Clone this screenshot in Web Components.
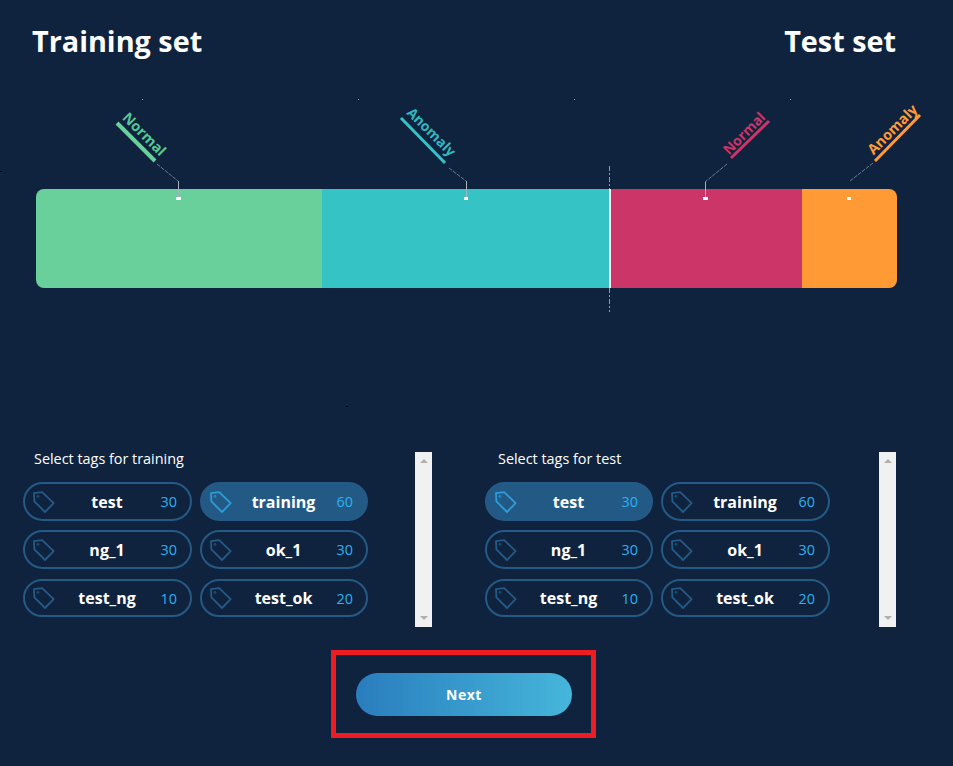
<!DOCTYPE html>
<html lang="en">
<head>
<meta charset="utf-8">
<title>Split</title>
<style>
    html, body { margin: 0; background: #0f233f; }
    body { font-family: "Open Sans", "Liberation Sans", sans-serif; color: #fff; }
</style>
</head>
<body>
<split-page>
    <set-header slot="header"></set-header>
    <split-chart slot="chart"></split-chart>
    <tag-panel slot="panels" heading="Select tags for training">
        <tag-chip count="30">test</tag-chip>
        <tag-chip count="60" active>training</tag-chip>
        <tag-chip count="30">ng_1</tag-chip>
        <tag-chip count="30">ok_1</tag-chip>
        <tag-chip count="10">test_ng</tag-chip>
        <tag-chip count="20">test_ok</tag-chip>
    </tag-panel>
    <tag-panel slot="panels" heading="Select tags for test" style="--main: 394px; --pad: 13px; --cols: 168px 169px">
        <tag-chip count="30" active>test</tag-chip>
        <tag-chip count="60">training</tag-chip>
        <tag-chip count="30">ng_1</tag-chip>
        <tag-chip count="30">ok_1</tag-chip>
        <tag-chip count="10">test_ng</tag-chip>
        <tag-chip count="20">test_ok</tag-chip>
    </tag-panel>
    <next-button slot="footer">Next</next-button>
</split-page>

<script>
/**
 * Page frame with the four stacked regions.
 */
class SplitPage extends HTMLElement {
    constructor() {
        super();
        this.attachShadow({ mode: 'open' });
    }

    connectedCallback() {
        this.shadowRoot.innerHTML = /*html*/`
            <style>
                :host { display: block; width: 953px; height: 766px; overflow: hidden; }
                .panels { display: flex; gap: 53px; padding-left: 23px; margin-top: 164px; }
                .footer { display: flex; padding-left: 331px; margin-top: 23px; }
            </style>
            <slot name="header"></slot>
            <slot name="chart"></slot>
            <div class="panels"><slot name="panels"></slot></div>
            <div class="footer"><slot name="footer"></slot></div>
        `;
    }
}

/**
 * The two big titles.
 */
class SetHeader extends HTMLElement {
    constructor() {
        super();
        this.attachShadow({ mode: 'open' });
    }

    connectedCallback() {
        this.shadowRoot.innerHTML = /*html*/`
            <style>
                :host {
                    display: flex;
                    justify-content: space-between;
                    height: 94px;
                    box-sizing: border-box;
                    padding: 22px 57px 0 32px;
                    font-size: 28.8px;
                    font-weight: 700;
                    line-height: 38px;
                }
            </style>
            <span>Training set</span>
            <span>Test set</span>
        `;
    }
}

/**
 * Stacked bar with the rotated labels drawn on top of it.
 */
class SplitChart extends HTMLElement {
    constructor() {
        super();
        this.attachShadow({ mode: 'open' });
    }

    connectedCallback() {
        this.shadowRoot.innerHTML = /*html*/`
            <style>
                :host { display: block; position: relative; padding-top: 95px; }
                .bar {
                    margin-left: 36px;
                    width: 861px; height: 99px;
                    display: flex; border-radius: 8px; overflow: hidden;
                }
                .bar div { height: 100%; }
                svg { position: absolute; left: 0; top: 0; overflow: visible; }
                text { font: 700 14.4px "Open Sans", "Liberation Sans", sans-serif; }
                text.small { font-size: 14px; }
            </style>
            <div class="bar">
                <div style="width:286px;background:#69cf9b"></div>
                <div style="width:287px;background:#35c3c6"></div>
                <div style="width:2px;background:#fff"></div>
                <div style="width:191px;background:#cc3568"></div>
                <div style="width:95px;background:#ff9a35"></div>
            </div>
            <svg width="953" height="230" viewBox="0 94 953 230">
                <!-- split divider -->
                <path d="M609.5 166V189M609.5 288V312" stroke="#8a9bb3" stroke-width="1" stroke-dasharray="5 2 2 2"/>

                <!-- Normal, training -->
                <path d="M117 123L155 161" stroke="#69cf9b" stroke-width="4"/>
                <text transform="translate(121.5 118.5) rotate(45)" fill="#55c795">Normal</text>
                <path d="M157 164L178 181" stroke="#6b7a90" stroke-width="1" stroke-dasharray="4 1"/>
                <path d="M178.5 181V197" stroke="#a9b3c0" stroke-width="1"/>
                <rect x="176" y="197" width="5" height="3" fill="#fff"/>

                <!-- Anomaly, training -->
                <path d="M401 118L445 163" stroke="#35c3c6" stroke-width="3"/>
                <text class="small" transform="translate(406 113.5) rotate(45)" fill="#2fb9bd">Anomaly</text>
                <path d="M449 168L466 181" stroke="#6b7a90" stroke-width="1" stroke-dasharray="4 1"/>
                <path d="M466.5 181V197" stroke="#a9b3c0" stroke-width="1"/>
                <rect x="464" y="197" width="4" height="3" fill="#fff"/>

                <!-- Normal, test -->
                <path d="M731 158L769 121" stroke="#cc3568" stroke-width="3"/>
                <text class="small" transform="translate(729 155.5) rotate(-45)" fill="#cc3568">Normal</text>
                <path d="M727 164L705 182" stroke="#6b7a90" stroke-width="1" stroke-dasharray="4 1"/>
                <path d="M705.5 182V197" stroke="#a9b3c0" stroke-width="1"/>
                <rect x="703" y="197" width="5" height="3" fill="#fff"/>

                <!-- Anomaly, test -->
                <path d="M875 161L920 115" stroke="#ff9a35" stroke-width="3"/>
                <text transform="translate(873.5 155.5) rotate(-45)" fill="#ff9a35">Anomaly</text>
                <path d="M873 163L850 181" stroke="#6b7a90" stroke-width="1" stroke-dasharray="4 1"/>
                <rect x="847" y="197" width="4" height="3" fill="#fff"/>

                <!-- stray ticks -->
                <g fill="#8a9bb3">
                    <rect x="142" y="99" width="1" height="1"/>
                    <rect x="358" y="99" width="1" height="1"/>
                    <rect x="574" y="99" width="1" height="1"/>
                    <rect x="790" y="99" width="1" height="1"/>
                </g>
                <rect x="0" y="171" width="2" height="1" fill="#000"/>
                <rect x="346" y="406" width="2" height="1" fill="#000"/>
            </svg>
        `;
    }
}

/**
 * Titled group of chips with a scrollbar beside it.
 *
 * @attr heading The text above the chips.
 */
class TagPanel extends HTMLElement {
    constructor() {
        super();
        this.attachShadow({ mode: 'open' });
    }

    connectedCallback() {
        this.shadowRoot.innerHTML = /*html*/`
            <style>
                :host { display: flex; height: 175px; }
                .main { width: var(--main, 392px); }
                h2 {
                    margin: 0;
                    padding: 0 0 16px var(--pad, 11px);
                    font-size: 14.4px;
                    font-weight: 400;
                    line-height: 14px;
                }
                .chips {
                    display: grid;
                    grid-template-columns: var(--cols, 169px 168px);
                    grid-template-rows: 39px 40px 38px;
                    column-gap: 8px;
                    row-gap: 9px;
                }
                .scroll {
                    width: 17px;
                    background: #f1f1f1;
                    display: flex;
                    flex-direction: column;
                    justify-content: space-between;
                    align-items: center;
                    padding: 7px 0;
                    box-sizing: border-box;
                }
                .up, .down { width: 0; height: 0; border: 4px solid transparent; }
                .up { border-top: 0; border-bottom: 4px solid #b0b0b0; }
                .down { border-bottom: 0; border-top: 4px solid #b0b0b0; }
            </style>
            <div class="main">
                <h2>${this.getAttribute('heading')}</h2>
                <div class="chips"><slot></slot></div>
            </div>
            <div class="scroll"><span class="up"></span><span class="down"></span></div>
        `;
    }
}

/**
 * Pill with a tag icon, a name and a count.
 *
 * @attr count The number on the right.
 * @attr active Fills the pill.
 */
class TagChip extends HTMLElement {
    constructor() {
        super();
        this.attachShadow({ mode: 'open' });
    }

    connectedCallback() {
        this.shadowRoot.innerHTML = /*html*/`
            <style>
                :host {
                    display: grid;
                    grid-template-columns: 1fr auto 1fr;
                    align-items: center;
                    box-sizing: border-box;
                    height: 100%;
                    max-height: 39px;
                    padding: 0 13px 0 8px;
                    border: 2px solid #245a85;
                    border-radius: 20px;
                    font-size: 16px;
                    font-weight: 700;
                    --icon: #245a85;
                }
                :host([active]) { background: #235a85; --icon: #2d9cd8; }
                svg { display: block; }
                .name { margin-left: 4px; }
                .count { justify-self: end; font-size: 14.4px; font-weight: 400; color: #29b1f2; }
            </style>
            <svg width="22" height="22" viewBox="0 0 22 22" fill="none" stroke="var(--icon)" stroke-width="1.8" stroke-linejoin="round">
                <path d="M1 2.2L9.2 1.2L20.6 12.2L12 21L1.4 10.4Z"/>
                <circle cx="5" cy="5.4" r="0.9" stroke-width="1"/>
            </svg>
            <span class="name"><slot></slot></span>
            <span class="count">${this.getAttribute('count')}</span>
        `;
    }
}

/**
 * Gradient button inside the red highlight frame.
 */
class NextButton extends HTMLElement {
    constructor() {
        super();
        this.attachShadow({ mode: 'open' });
    }

    connectedCallback() {
        this.shadowRoot.innerHTML = /*html*/`
            <style>
                :host {
                    display: block;
                    box-sizing: border-box;
                    width: 265px;
                    height: 88px;
                    padding: 18px 19px 17px 20px;
                    border: 5px solid #ee1c25;
                }
                .btn {
                    height: 43px;
                    border-radius: 22px;
                    background: linear-gradient(90deg, #2a7dbd, #45b6db);
                    display: flex;
                    align-items: center;
                    justify-content: center;
                    font-size: 14px;
                    font-weight: 700;
                    letter-spacing: 0.5px;
                }
            </style>
            <div class="btn"><slot></slot></div>
        `;
    }
}

customElements.define('split-page', SplitPage);
customElements.define('set-header', SetHeader);
customElements.define('split-chart', SplitChart);
customElements.define('tag-panel', TagPanel);
customElements.define('tag-chip', TagChip);
customElements.define('next-button', NextButton);
</script>
</body>
</html>
